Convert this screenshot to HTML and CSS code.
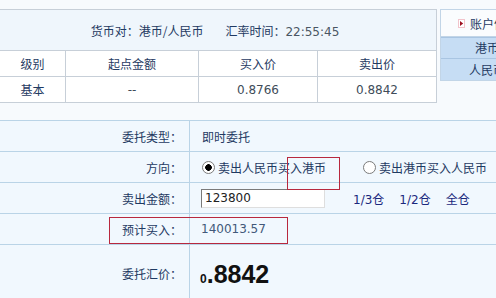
FILE: index.html
```html
<!DOCTYPE html>
<html lang="zh-CN">
<head>
  <meta charset="UTF-8">
  <meta name="viewport" content="width=device-width, initial-scale=1.0">
  <title>港币兑换</title>
  <link rel="stylesheet" href="styles.css">
</head>
<body>
  <div class="top">
    <table class="quote">
      <tr class="pair">
        <td colspan="4">货币对：港币/人民币<span class="time">汇率时间：<span class="num">22:55:45</span></span></td>
      </tr>
      <tr>
        <td class="c1">级别</td>
        <td class="c2">起点金额</td>
        <td class="c3">买入价</td>
        <td class="c4">卖出价</td>
      </tr>
      <tr class="nums">
        <td>基本</td>
        <td class="num">--</td>
        <td class="num">0.8766</td>
        <td class="num">0.8842</td>
      </tr>
    </table>

    <div class="account">
      <div class="account-title">
        <svg class="arrow" width="7" height="9" viewBox="0 0 7 9">
          <rect x="0.5" y="0.5" width="6" height="8" fill="#fff" stroke="#f2c4cc"/>
          <path d="M2 2 L5.2 4.5 L2 7 Z" fill="#9c1020"/>
        </svg>
        <span>账户信息</span>
      </div>
      <div class="account-row first">港币</div>
      <div class="account-row">人民币</div>
    </div>
  </div>

  <div class="order">
    <div class="row">
      <div class="label">委托类型：</div>
      <div class="value">即时委托</div>
    </div>
    <div class="row">
      <div class="label">方向：</div>
      <div class="value">
        <label class="choice"><input type="radio" name="dir" checked>卖出人民币买入港币</label>
        <label class="choice second"><input type="radio" name="dir">卖出港币买入人民币</label>
      </div>
    </div>
    <div class="row">
      <div class="label">卖出金额：</div>
      <div class="value">
        <input class="amount" type="text" value="123800">
        <a class="part first" href="#">1/3仓</a>
        <a class="part" href="#">1/2仓</a>
        <a class="part" href="#">全仓</a>
      </div>
    </div>
    <div class="row">
      <div class="label">预计买入：</div>
      <div class="value num result">140013.57</div>
    </div>
    <div class="row big">
      <div class="label">委托汇价：</div>
      <div class="value price"><span class="lead">0</span>.8842</div>
    </div>
  </div>

  <div class="mark mark-dir"></div>
  <div class="mark mark-result"></div>
</body>
</html>
```

FILE: styles.css
```css
body {
  margin: 0;
  width: 496px;
  height: 298px;
  overflow: hidden;
  position: relative;
  background-color: #f7fafd;
  font-family: "Noto Sans CJK SC", sans-serif;
  font-size: 12px;
  color: #1f3a62;
}

.num {
  font-family: "DejaVu Sans", Verdana, sans-serif;
}

.top {
  display: flex;
  gap: 3px;
  padding-top: 9px;
}

/* 报价表 */
.quote {
  width: 437px;
  flex: none;
  border-collapse: collapse;
  background-color: #fff;
}

.quote td {
  border: 1px solid #c7cfd8;
  text-align: center;
  padding: 0;
  height: 25px;
}

.quote td:first-child {
  border-left: none;
}

.quote .pair td {
  height: 40px;
  background-color: #eff6fc;
  padding-right: 6px;
}

.pair .time {
  margin-left: 22px;
}

.pair .num {
  color: #4a5663;
}

.c1 { width: 65px; }
.c2 { width: 132px; }
.c3 { width: 118px; }

.nums .num {
  color: #404c59;
}

/* 账户 */
.account {
  width: 92px;
  flex: none;
  height: 70px;
  border: 1px solid #c2d5e7;
  background-color: #fafcfe;
  white-space: nowrap;
}

.account-title {
  height: 26px;
  display: flex;
  align-items: center;
  gap: 5px;
  padding-left: 17px;
  border-bottom: 1px solid #c2d5e7;
}

.account-row {
  height: 21px;
  line-height: 21px;
  text-align: center;
  background-color: #c6ddf4;
  border-top: 1px solid #a9c5e2;
}

.account-row.first {
  height: 20px;
  line-height: 20px;
}

/* 委托表单 */
.order {
  margin-top: 17px;
  border-top: 1px solid #bad4e7;
  background-color: #f1f8fe;
}

.row {
  display: grid;
  grid-template-columns: 190px 1fr;
  height: 30px;
  border-bottom: 1px solid #bad4e7;
}

.row.big {
  height: 56px;
  border-bottom: none;
}

.label {
  display: flex;
  align-items: center;
  justify-content: flex-end;
  padding-right: 7px;
  border-right: 1px solid #bad4e7;
}

.value {
  display: flex;
  align-items: center;
  padding-left: 12px;
  white-space: nowrap;
}

.choice {
  display: flex;
  align-items: center;
  gap: 3px;
}

.choice.second {
  margin-left: 37px;
}

.choice input {
  appearance: none;
  width: 13px;
  height: 13px;
  margin: 0;
  border: 1px solid #7b7b7b;
  border-radius: 50%;
  background-color: #fff;
}

.choice input:checked {
  background: radial-gradient(circle, #000 0, #000 3px, #fff 3.6px);
}

.amount {
  box-sizing: border-box;
  width: 124px;
  height: 19px;
  margin: 0 0 0 -1px;
  padding: 0 3px;
  border: 1px solid;
  border-color: #7a7a7a #dedede #dedede #7a7a7a;
  font-family: "DejaVu Sans", Verdana, sans-serif;
  font-size: 12px;
  color: #222;
}

.part {
  color: #1b287d;
  text-decoration: none;
  font-family: "DejaVu Sans", "Noto Sans CJK SC", sans-serif;
  margin-left: 15px;
}

.part.first {
  margin-left: 28px;
}

.result {
  color: #42597a;
  padding-left: 11px;
}

.price {
  align-items: baseline;
  padding-top: 15px;
  padding-left: 10px;
  font-family: "Liberation Sans", Arial, sans-serif;
  font-weight: bold;
  font-size: 25px;
  color: #111;
}

.price .lead {
  font-size: 12px;
}

/* 标注框 */
.mark {
  position: absolute;
  border: 1px solid #b8283e;
}

.mark-dir {
  left: 287px;
  top: 157px;
  width: 51px;
  height: 31px;
}

.mark-result {
  left: 109px;
  top: 217px;
  width: 177px;
  height: 25px;
}
```
